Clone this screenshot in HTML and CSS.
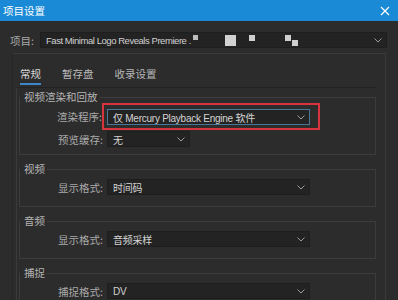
FILE: index.html
```html
<!DOCTYPE html>
<html lang="zh">
<head>
<meta charset="utf-8">
<link rel="stylesheet" href="styles.css">
</head>
<body>
<div class="titlebar">
  <span class="title">项目设置</span>
  <svg class="close" width="10" height="10" viewBox="0 0 10 10"><path d="M1 1L9 9M9 1L1 9" stroke="#ffffff" stroke-width="1.2"/></svg>
</div>
<div class="project-row">
  <span class="plabel">项目:</span>
  <div class="select wide">
    <span class="ptext">Fast Minimal Logo Reveals Premiere .<i class="blur b1"></i><i class="blur b2"></i><i class="blur b3"></i><i class="blur b4"></i><i class="blur b5"></i></span>
    <svg class="chev" width="8" height="5" viewBox="0 0 8 5"><path d="M0.5 0.5L4 4L7.5 0.5" fill="none" stroke="#9a9a9a" stroke-width="1"/></svg>
  </div>
</div>
<div class="panel">
  <div class="tabs">
    <span class="tab active">常规</span>
    <span class="tab">暂存盘</span>
    <span class="tab">收录设置</span>
  </div>
  <div class="content">
    <fieldset class="group g1">
      <legend>视频渲染和回放</legend>
      <div class="row hl-row">
        <span class="label">渲染程序:</span>
        <div class="hl">
          <div class="select focus">
            <span class="stext">仅 Mercury Playback Engine 软件</span>
            <svg class="chev" width="8" height="5" viewBox="0 0 8 5"><path d="M0.5 0.5L4 4L7.5 0.5" fill="none" stroke="#9a9a9a" stroke-width="1"/></svg>
          </div>
        </div>
      </div>
      <div class="row r2">
        <span class="label">预览缓存:</span>
        <div class="select short">
          <span class="stext">无</span>
          <svg class="chev" width="8" height="5" viewBox="0 0 8 5"><path d="M0.5 0.5L4 4L7.5 0.5" fill="none" stroke="#9a9a9a" stroke-width="1"/></svg>
        </div>
      </div>
    </fieldset>
    <fieldset class="group">
      <legend>视频</legend>
      <div class="row">
        <span class="label">显示格式:</span>
        <div class="select">
          <span class="stext">时间码</span>
          <svg class="chev" width="8" height="5" viewBox="0 0 8 5"><path d="M0.5 0.5L4 4L7.5 0.5" fill="none" stroke="#9a9a9a" stroke-width="1"/></svg>
        </div>
      </div>
    </fieldset>
    <fieldset class="group">
      <legend>音频</legend>
      <div class="row">
        <span class="label">显示格式:</span>
        <div class="select">
          <span class="stext">音频采样</span>
          <svg class="chev" width="8" height="5" viewBox="0 0 8 5"><path d="M0.5 0.5L4 4L7.5 0.5" fill="none" stroke="#9a9a9a" stroke-width="1"/></svg>
        </div>
      </div>
    </fieldset>
    <fieldset class="group">
      <legend>捕捉</legend>
      <div class="row">
        <span class="label">捕捉格式:</span>
        <div class="select">
          <span class="stext">DV</span>
          <svg class="chev" width="8" height="5" viewBox="0 0 8 5"><path d="M0.5 0.5L4 4L7.5 0.5" fill="none" stroke="#9a9a9a" stroke-width="1"/></svg>
        </div>
      </div>
    </fieldset>
  </div>
</div>
</body>
</html>
```
FILE: styles.css
```css
* { box-sizing: border-box; }
html, body { margin: 0; padding: 0; }
body {
  width: 398px;
  height: 300px;
  overflow: hidden;
  background: #2c2c2c;
  font-family: "Noto Sans CJK SC", "Liberation Sans", sans-serif;
  font-size: 10.5px;
  color: #b0b0b0;
}
.titlebar {
  height: 21px;
  background: #1b8ad6;
  display: flex;
  align-items: center;
  justify-content: space-between;
  padding: 0 8px 0 3px;
}
.title { color: #ffffff; font-size: 10.5px; line-height: 21px; }
.close { display: block; }

.project-row {
  display: flex;
  align-items: center;
  padding: 11px 11px 0 10px;
  height: 27px;
}
.plabel { width: 30px; color: #a8a8a8; font-size: 10.5px; }
.select {
  height: 16px;
  background: #232323;
  border: 1px solid #1e1e1e;
  display: flex;
  align-items: center;
  justify-content: space-between;
  padding: 0 4px 0 5px;
  width: 203px;
  color: #d2d2d2;
  flex: none;
}
.select.wide { flex: 1; }
.select.short { width: 83px; }
.select.focus { border-color: #4a7696; }
.ptext {
  font-family: "Liberation Sans", "Noto Sans CJK SC", sans-serif;
  font-size: 9.5px;
  letter-spacing: -0.45px;
  color: #d0d0d0;
  display: flex;
  align-items: center;
}
.stext {
  font-family: "Liberation Sans", "Noto Sans CJK SC", sans-serif;
  font-size: 10px;
  letter-spacing: -0.25px;
  color: #d4d4d4;
}
.chev { display: block; flex: none; }
.blur { display: inline-block; background: #cfcfcf; flex: none; }
.b1 { width: 5px; height: 5px; margin: 0 0 6px 2px; background: #bdbdbd; }
.b2 { width: 11px; height: 11px; margin-left: 27px; background: #d2d2d2; }
.b3 { width: 6px; height: 6px; margin: 0 0 4px 13px; }
.b4 { width: 6px; height: 6px; margin: 0 0 5px 30px; }
.b5 { width: 6px; height: 6px; margin: 6px 0 0 1px; }

.panel {
  margin: 5px 12px 0 12px;
  border-top: 1px solid #3a3a3a;
  border-left: 1px solid #252525;
  border-right: 1px solid #3a3a3a;
}
.tabs {
  display: flex;
  height: 33px;
  align-items: center;
  padding: 6px 0 0 7px;
}
.tab { font-size: 10.5px; color: #b8b8b8; margin-right: 21px; position: relative; line-height: 16px; }
.tab.active { color: #d8d8d8; }
.tab.active::after {
  content: "";
  position: absolute;
  left: 0;
  right: 0;
  bottom: -3px;
  height: 2px;
  background: #3f86c8;
}
.content {
  margin: 0 9px 0 3px;
  border-top: 1px solid #232323;
  border-left: 1px solid #3a3a3a;
  padding: 3px 0 0 2px;
}
.group {
  margin: 0 0 8px 0;
  padding: 0 0 11px 0;
  border: 1px solid #3c3c3c;
  min-width: 0;
}
.group legend {
  padding: 0 2px 0 4px;
  font-size: 10.5px;
  line-height: 12px;
  height: 12px;
  color: #b4b4b4;
}
.g1 { padding-bottom: 7px; }
.row {
  display: flex;
  align-items: center;
  height: 16px;
  margin-top: 4px;
}
.label {
  width: 87px;
  flex: none;
  text-align: right;
  padding-right: 4px;
  color: #aaaaaa;
  font-size: 10.5px;
}
.hl-row { height: 29px; margin-top: -1px; }
.hl-row .label { padding-right: 5px; }
.row.r2 { margin-top: 0; }
.hl {
  margin-left: -5px;
  border: 2px solid #d7343d;
  padding: 4px 8px 3px 3px;
}
```
